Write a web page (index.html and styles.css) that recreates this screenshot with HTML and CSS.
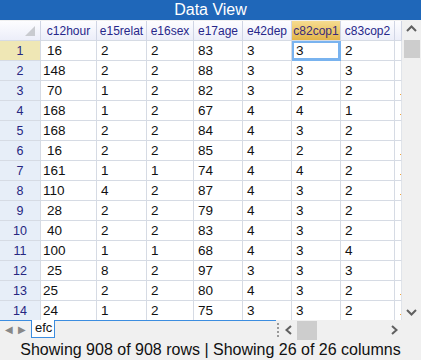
FILE: index.html
```html
<!DOCTYPE html>
<html>
<head>
<meta charset="utf-8">
<link rel="stylesheet" href="styles.css">
</head>
<body>
<div class="title">Data View</div>
<div class="main">
  <div class="grid">
    <div class="row head">
      <div class="c rh corner"><span class="tri"></span></div>
      <div class="c w1">c12hour</div>
      <div class="c w2">e15relat</div>
      <div class="c w3">e16sex</div>
      <div class="c w4">e17age</div>
      <div class="c w5">e42dep</div>
      <div class="c w6 sel">c82cop1</div>
      <div class="c w7">c83cop2</div>
      <div class="c w8"></div>
    </div>
    <div class="row selrow"><div class="c rh">1</div><div class="c w1 sp">16</div><div class="c w2">2</div><div class="c w3">2</div><div class="c w4">83</div><div class="c w5">3</div><div class="c w6 cur">3</div><div class="c w7">2</div><div class="c w8"></div></div>
    <div class="row"><div class="c rh">2</div><div class="c w1">148</div><div class="c w2">2</div><div class="c w3">2</div><div class="c w4">88</div><div class="c w5">3</div><div class="c w6">3</div><div class="c w7">3</div><div class="c w8"></div></div>
    <div class="row"><div class="c rh">3</div><div class="c w1 sp">70</div><div class="c w2">1</div><div class="c w3">2</div><div class="c w4">82</div><div class="c w5">3</div><div class="c w6">2</div><div class="c w7">2</div><div class="c w8"><i class="dot"></i></div></div>
    <div class="row"><div class="c rh">4</div><div class="c w1">168</div><div class="c w2">1</div><div class="c w3">2</div><div class="c w4">67</div><div class="c w5">4</div><div class="c w6">4</div><div class="c w7">1</div><div class="c w8"><i class="dot"></i></div></div>
    <div class="row"><div class="c rh">5</div><div class="c w1">168</div><div class="c w2">2</div><div class="c w3">2</div><div class="c w4">84</div><div class="c w5">4</div><div class="c w6">3</div><div class="c w7">2</div><div class="c w8"></div></div>
    <div class="row"><div class="c rh">6</div><div class="c w1 sp">16</div><div class="c w2">2</div><div class="c w3">2</div><div class="c w4">85</div><div class="c w5">4</div><div class="c w6">2</div><div class="c w7">2</div><div class="c w8"><i class="dot"></i></div></div>
    <div class="row"><div class="c rh">7</div><div class="c w1">161</div><div class="c w2">1</div><div class="c w3">1</div><div class="c w4">74</div><div class="c w5">4</div><div class="c w6">4</div><div class="c w7">2</div><div class="c w8"><i class="dot"></i></div></div>
    <div class="row"><div class="c rh">8</div><div class="c w1">110</div><div class="c w2">4</div><div class="c w3">2</div><div class="c w4">87</div><div class="c w5">4</div><div class="c w6">3</div><div class="c w7">2</div><div class="c w8"><i class="dot"></i></div></div>
    <div class="row"><div class="c rh">9</div><div class="c w1 sp">28</div><div class="c w2">2</div><div class="c w3">2</div><div class="c w4">79</div><div class="c w5">4</div><div class="c w6">3</div><div class="c w7">2</div><div class="c w8"></div></div>
    <div class="row"><div class="c rh">10</div><div class="c w1 sp">40</div><div class="c w2">2</div><div class="c w3">2</div><div class="c w4">83</div><div class="c w5">4</div><div class="c w6">3</div><div class="c w7">2</div><div class="c w8"></div></div>
    <div class="row"><div class="c rh">11</div><div class="c w1">100</div><div class="c w2">1</div><div class="c w3">1</div><div class="c w4">68</div><div class="c w5">4</div><div class="c w6">3</div><div class="c w7">4</div><div class="c w8"></div></div>
    <div class="row"><div class="c rh">12</div><div class="c w1 sp">25</div><div class="c w2">8</div><div class="c w3">2</div><div class="c w4">97</div><div class="c w5">3</div><div class="c w6">3</div><div class="c w7">3</div><div class="c w8"></div></div>
    <div class="row"><div class="c rh">13</div><div class="c w1">25</div><div class="c w2">2</div><div class="c w3">2</div><div class="c w4">80</div><div class="c w5">4</div><div class="c w6">3</div><div class="c w7">2</div><div class="c w8"><i class="dot"></i></div></div>
    <div class="row"><div class="c rh">14</div><div class="c w1">24</div><div class="c w2">1</div><div class="c w3">2</div><div class="c w4">75</div><div class="c w5">3</div><div class="c w6">3</div><div class="c w7">2</div><div class="c w8"><i class="dot"></i></div></div>
  </div>
  <div class="vscroll">
    <svg class="arr" width="19" height="16" viewBox="0 0 19 16"><path d="M5 10 L9.5 5.5 L14 10" fill="none" stroke="#606060" stroke-width="2"/></svg>
    <div class="vthumb"></div>
    <div class="vfill"></div>
    <svg class="arr" width="19" height="16" viewBox="0 0 19 16"><path d="M5 6 L9.5 10.5 L14 6" fill="none" stroke="#606060" stroke-width="2"/></svg>
  </div>
</div>
<div class="bottom">
  <div class="tabs">
    <span class="nav">&#9664;</span><span class="nav">&#9654;</span>
    <span class="tab">efc</span>
    <span class="tabline"></span>
  </div>
  <div class="split"></div>
  <div class="hscroll">
    <svg width="16" height="20" viewBox="0 0 16 20"><path d="M10 6 L5.5 10 L10 14" fill="none" stroke="#606060" stroke-width="2"/></svg>
    <div class="hthumb"></div>
    <div class="hfill"></div>
    <svg width="16" height="20" viewBox="0 0 16 20"><path d="M6 6 L10.5 10 L6 14" fill="none" stroke="#606060" stroke-width="2"/></svg>
  </div>
  <div class="corner2"></div>
</div>
<div class="status">Showing 908 of 908 rows | Showing 26 of 26 columns</div>
</body>
</html>
```
FILE: styles.css
```css
* { box-sizing: border-box; }
html, body { margin: 0; padding: 0; }
body {
  width: 421px;
  height: 360px;
  overflow: hidden;
  background: #f0f0f0;
  font-family: "Liberation Sans", Arial, sans-serif;
}
.title {
  background: #1f67b9;
  color: #fff;
  font-size: 16px;
  line-height: 20px;
  text-align: center;
  border-bottom: 1px solid #f0f0f0;
  height: 21px;
}
.main {
  display: flex;
  height: 299px;
}
.grid {
  width: 402px;
  height: 299px;
  overflow: hidden;
  background: #fff;
}
.row {
  display: flex;
  height: 20px;
}
.c {
  flex: none;
  height: 20px;
  border-right: 1px solid #d6dbe4;
  border-bottom: 1px solid #d6dbe4;
  font-size: 13.5px;
  line-height: 20px;
  padding-left: 2px;
  color: #111;
  white-space: pre;
  overflow: hidden;
}
.sp { padding-left: 6px; }
.rh {
  width: 41px;
  background: #e7eef8;
  color: #262681;
  text-align: center;
  padding-left: 0;
  font-size: 12.5px;
}
.selrow .rh { background: #efe7b5; }
.w1 { width: 56px; }
.w2 { width: 50px; padding-left: 4px; }
.w3 { width: 47px; padding-left: 4px; }
.w4 { width: 49px; padding-left: 4px; }
.w5 { width: 49px; padding-left: 4px; }
.w6 { width: 49px; padding-left: 4px; }
.w7 { width: 54px; padding-left: 4px; }
.w8 { width: 7px; border-right: 1px solid #e0e4ea; position: relative; }
.head .c {
  background: linear-gradient(#fdfdff, #eceef9);
  color: #27278a;
  font-size: 12px;
  line-height: 21px;
  text-align: center;
  padding-left: 0;
  border-right: 1px solid #d0d5e4;
}
.head .rh.corner { position: relative; }
.tri {
  position: absolute;
  right: 5px;
  bottom: 4px;
  width: 0;
  height: 0;
  border-left: 10px solid transparent;
  border-bottom: 10px solid #c9cbd0;
}
.head .c.sel {
  background: linear-gradient(#f6dc90, #e3b54a);
  color: #3a2b7a;
}
.cur {
  box-shadow: inset 0 0 0 2px #79b3ef;
  border-right-color: #79b3ef;
  border-bottom-color: #79b3ef;
}
.dot {
  position: absolute;
  left: 5px;
  top: 13px;
  width: 1px;
  height: 1px;
  background: #f2a33c;
}
.vscroll {
  width: 19px;
  height: 299px;
  background: #f0f0f0;
  display: flex;
  flex-direction: column;
  align-items: center;
}
.arr { flex: none; display: block; }
.vthumb {
  width: 16px;
  height: 18px;
  margin-top: 3px;
  background: #cdcdcd;
}
.vfill { flex: 1; }
.bottom {
  display: flex;
  height: 20px;
  align-items: stretch;
}
.tabs {
  width: 276px;
  position: relative;
  display: flex;
  align-items: flex-start;
  border-top: 1px solid #3c8de0;
}
.nav {
  font-size: 10px;
  color: #888;
  width: 13px;
  text-align: center;
  line-height: 17px;
}
.nav:first-child { margin-left: 2px; }
.tab {
  margin-left: 3px;
  margin-top: -1px;
  background: #fff;
  border: 1px solid #3c8de0;
  border-top: none;
  height: 18px;
  width: 24px;
  font-size: 13px;
  line-height: 16px;
  padding-left: 3px;
  color: #111;
}
.split {
  width: 4px;
  background-image: radial-gradient(circle, #9a9a9a 1px, transparent 1.2px);
  background-size: 4px 4px;
  background-position: 0 3px;
  background-repeat: repeat-y;
  margin: 3px 0 3px 0;
}
.hscroll {
  width: 122px;
  display: flex;
  align-items: center;
  padding-left: 1px;
}
.hthumb {
  width: 20px;
  height: 19px;
  background: #cdcdcd;
}
.hfill { flex: 1; }
.corner2 { width: 19px; }
.status {
  height: 20px;
  font-size: 16px;
  line-height: 19px;
  text-align: center;
  color: #111;
}
```
